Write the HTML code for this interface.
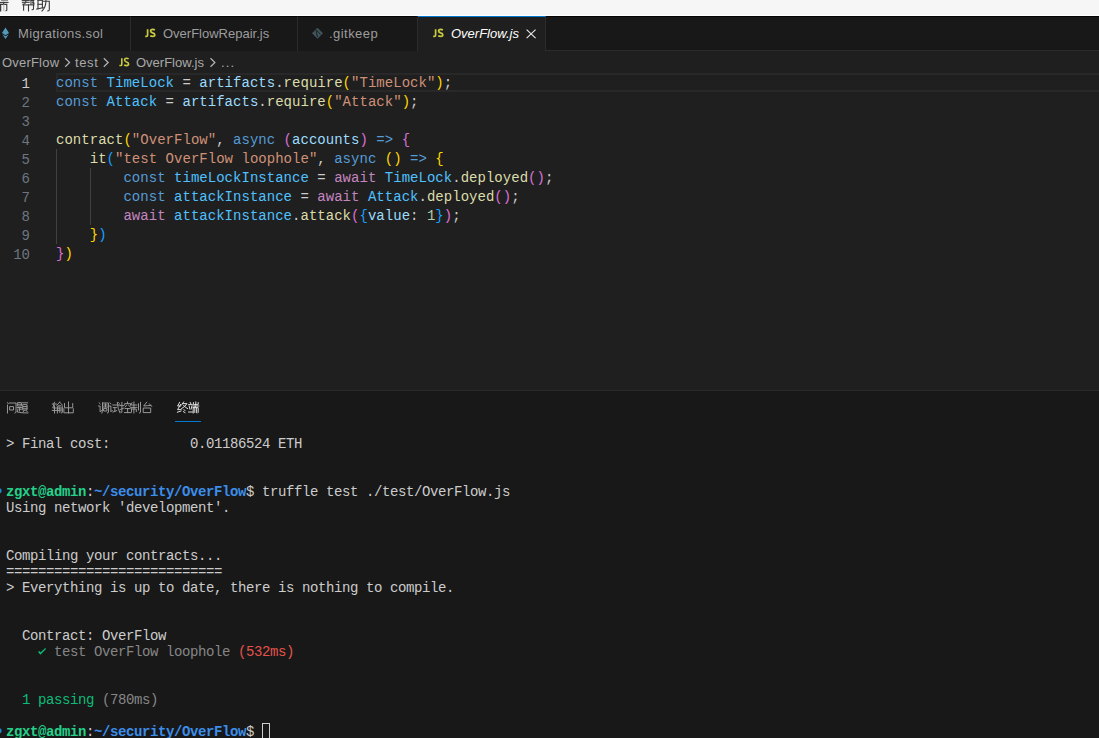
<!DOCTYPE html>
<html><head><meta charset="utf-8">
<style>
*{margin:0;padding:0;box-sizing:border-box}
html,body{width:1099px;height:738px;overflow:hidden;background:#1f1f1f}
body{position:relative;font-family:"Liberation Sans",sans-serif}
.abs{position:absolute}
svg{position:absolute;overflow:visible}
#menubar{left:0;top:0;width:1099px;height:15px;background:#f6f6f6}
#menuline{left:0;top:15px;width:1099px;height:1px;background:#ffffff}
#tabs{left:0;top:16px;width:1099px;height:35px;background:#181818;border-bottom:1px solid #2b2b2b;border-top:1px solid #050505}
.tab{position:absolute;top:-1px;height:35px;background:#181818;border-top:1px solid #050505;border-right:1px solid #2b2b2b;color:#9d9d9d;font-size:13px;line-height:34px;white-space:nowrap}
.tab.active{background:#1f1f1f;color:#fff;height:36px;border-top:1px solid #0078d4}
.tab span{position:absolute;top:0}
#crumbs{left:0;top:51px;width:1099px;height:22px;background:#1f1f1f;color:#a9a9a9;font-size:13px;line-height:22px;white-space:nowrap}
#crumbs span{position:absolute;top:1px}
.ln{position:absolute;left:0;width:30px;text-align:right;color:#6e7681;font-family:"Liberation Mono",monospace;font-size:14px;line-height:19px;height:19px}
.code{position:absolute;left:56px;font-family:"Liberation Mono",monospace;font-size:14px;line-height:19px;height:19px;white-space:pre;color:#cccccc}
#curline{left:56px;top:73px;width:1043px;height:19px;border:2px solid #282828;border-right:none}
.guide{position:absolute;width:1px;background:#404040}
#panel{left:0;top:390px;width:1099px;height:348px;background:#181818;border-top:1px solid #2b2b2b}
.term{position:absolute;left:6px;font-family:"Liberation Mono",monospace;font-size:14px;letter-spacing:-0.4px;line-height:16px;height:16px;white-space:pre;color:#cccccc}
.kw{color:#569cd6}.cn{color:#4fc1ff}.vr{color:#9cdcfe}.fn{color:#dcdcaa}.st{color:#ce9178}.aw{color:#c586c0}.nu{color:#b5cea8}
.b1{color:#ffd700}.b2{color:#da70d6}.b3{color:#179fff}
.tg{color:#23d18b;font-weight:bold}.tb{color:#3b8eea;font-weight:bold}.gr{color:#0dbc79}.gy{color:#868686}.rd{color:#e5534b}
.cjk path{fill:none;stroke-linecap:square}
.code i,.term i{position:absolute;top:0;font-style:normal}
</style></head><body>
<div id="menubar" class="abs"></div>
<div id="menuline" class="abs"></div>

<svg class="cjk" style="left:0;top:0" width="60" height="16" viewBox="0 0 60 16" stroke="#3a3a3a" stroke-width="1.1">
  
  <path d="M1.5,0 H7.5"/>
  <path d="M0,2.4 H8"/>
  <path d="M3.6,2.4 V4.2"/>
  <path d="M0.4,4.4 H6.8 V10.2 Q6.8,10.8 6,10.8"/>
  <path d="M0.5,4.4 V10.8" stroke-width="1.5"/>
  <path d="M3.8,5 V10.6" stroke="#bbbbbb"/>
  
  <path d="M22.3,0.4 H29.2"/>
  <path d="M22.3,2.3 H29.2"/>
  <path d="M25.8,0 V2.3 Q25.6,3.8 23,4.2"/>
  <path d="M31,0 V4.2"/>
  <path d="M31,0.4 H33.8 L32.6,2.4 Q34.4,2.9 33.9,3.6 L33,3.8"/>
  <path d="M23,4.9 H34"/>
  <path d="M23.6,4.9 V10.2"/>
  <path d="M28.5,4.9 V11"/>
  <path d="M33.5,4.9 V9 Q33.5,9.7 32.2,9.7"/>
  
  <path d="M38,0 V8.6"/>
  <path d="M42.4,0 V8"/>
  <path d="M38,0.3 H42.4"/>
  <path d="M38,4.3 H42.4"/>
  <path d="M36.8,9 L43.2,7.6"/>
  <path d="M43.6,1.2 H49.3 V10 Q49.3,10.9 47.9,10.9"/>
  <path d="M46,0 Q46.1,7.2 42,11"/>
</svg>

<div id="tabs" class="abs">
  <div class="tab" style="left:0;width:131px"><span style="left:18px;letter-spacing:0.36px">Migrations.sol</span></div>
  <div class="tab" style="left:131px;width:167px"><span style="left:32px">OverFlowRepair.js</span></div>
  <div class="tab" style="left:298px;width:120px"><span style="left:31px;letter-spacing:0.45px">.gitkeep</span></div>
  <div class="tab active" style="left:418px;width:128px"><span style="left:33px;font-style:italic">OverFlow.js</span></div>
</div>

<svg style="left:0;top:0" width="560" height="50" viewBox="0 0 560 50">
  <path d="M5.5,27.4 L9,33 L5.5,35.2 L2,33 Z" fill="#519aba"/>
  <path d="M2.3,34.2 L5.5,36.2 L8.7,34.2 L5.5,39 Z" fill="#519aba"/>
  <g fill="none" stroke="#cbcb41" stroke-width="1.7">
    <path d="M147.6,29.3 V35.2 Q147.6,36.3 146.3,36.3 H145.2"/>
    <path d="M154.8,30 Q154,29.3 152.6,29.3 Q150.6,29.3 150.6,31 Q150.6,32.3 152.6,32.9 Q154.8,33.5 154.8,35 Q154.8,36.4 152.6,36.4 Q151.2,36.4 150.2,35.8"/>
  </g>
  <g fill="none" stroke="#cbcb41" stroke-width="1.7">
    <path d="M435.6,29.3 V35.2 Q435.6,36.3 434.3,36.3 H433.2"/>
    <path d="M442.8,30 Q442,29.3 440.6,29.3 Q438.6,29.3 438.6,31 Q438.6,32.3 440.6,32.9 Q442.8,33.5 442.8,35 Q442.8,36.4 440.6,36.4 Q439.2,36.4 438.2,35.8"/>
  </g>
  <path d="M317.5,27.8 L323,33.3 L317.5,38.8 L312,33.3 Z" fill="#41535b"/>
  <path d="M316,30.5 L317.5,37 M316.5,30 L320.5,34.5" stroke="#181818" stroke-width="0.9" fill="none"/>
  <path d="M526.6,29.6 L535.6,38.2 M535.6,29.6 L526.6,38.2" stroke="#e8e8e8" stroke-width="1.1" fill="none"/>
</svg>

<div id="crumbs" class="abs">
  <span style="left:2px;letter-spacing:0.2px">OverFlow</span>
  <span style="left:75px;letter-spacing:0.6px">test</span>
  <span style="left:136px">OverFlow.js</span>
  <span style="left:221px;letter-spacing:1.2px">...</span>
</div>
<svg style="left:0;top:0" width="240" height="75" viewBox="0 0 240 75">
  <g fill="none" stroke="#b4b4b4" stroke-width="1.2">
    <path d="M65.2,58.3 L69.6,62.5 L65.2,66.7"/>
    <path d="M103.8,58.3 L108.2,62.5 L103.8,66.7"/>
    <path d="M210.5,58.3 L214.9,62.5 L210.5,66.7"/>
  </g>
  <g fill="none" stroke="#cbcb41" stroke-width="1.6">
    <path d="M121.8,58.3 V64.4 Q121.8,65.5 120.5,65.5 H119.4"/>
    <path d="M128.6,59 Q127.8,58.3 126.5,58.3 Q124.6,58.3 124.6,60 Q124.6,61.3 126.5,61.9 Q128.6,62.5 128.6,64 Q128.6,65.6 126.5,65.6 Q125.1,65.6 124.2,65"/>
  </g>
</svg>

<div id="curline" class="abs"></div>
<div class="ln" style="top:75px;color:#cccccc">1</div>
<div class="ln" style="top:94px">2</div>
<div class="ln" style="top:113px">3</div>
<div class="ln" style="top:132px">4</div>
<div class="ln" style="top:151px">5</div>
<div class="ln" style="top:170px">6</div>
<div class="ln" style="top:189px">7</div>
<div class="ln" style="top:208px">8</div>
<div class="ln" style="top:227px">9</div>
<div class="ln" style="top:246px">10</div>
<div class="guide" style="left:56px;top:149px;height:95px"></div>
<div class="guide" style="left:90px;top:168px;height:57px"></div>
<div class="code" style="top:74px"><i class="kw" style="left:0.0px">c</i><i class="kw" style="left:8.43px">o</i><i class="kw" style="left:16.86px">n</i><i class="kw" style="left:25.29px">s</i><i class="kw" style="left:33.72px">t</i><i class="cn" style="left:50.58px">T</i><i class="cn" style="left:59.01px">i</i><i class="cn" style="left:67.44px">m</i><i class="cn" style="left:75.87px">e</i><i class="cn" style="left:84.3px">L</i><i class="cn" style="left:92.73px">o</i><i class="cn" style="left:101.16px">c</i><i class="cn" style="left:109.59px">k</i><i style="left:126.45px">=</i><i class="vr" style="left:143.31px">a</i><i class="vr" style="left:151.74px">r</i><i class="vr" style="left:160.17px">t</i><i class="vr" style="left:168.6px">i</i><i class="vr" style="left:177.03px">f</i><i class="vr" style="left:185.46px">a</i><i class="vr" style="left:193.89px">c</i><i class="vr" style="left:202.32px">t</i><i class="vr" style="left:210.75px">s</i><i style="left:219.18px">.</i><i class="fn" style="left:227.61px">r</i><i class="fn" style="left:236.04px">e</i><i class="fn" style="left:244.47px">q</i><i class="fn" style="left:252.9px">u</i><i class="fn" style="left:261.33px">i</i><i class="fn" style="left:269.76px">r</i><i class="fn" style="left:278.19px">e</i><i class="b1" style="left:286.62px">(</i><i class="st" style="left:295.05px">"</i><i class="st" style="left:303.48px">T</i><i class="st" style="left:311.91px">i</i><i class="st" style="left:320.34px">m</i><i class="st" style="left:328.77px">e</i><i class="st" style="left:337.2px">L</i><i class="st" style="left:345.63px">o</i><i class="st" style="left:354.06px">c</i><i class="st" style="left:362.49px">k</i><i class="st" style="left:370.92px">"</i><i class="b1" style="left:379.35px">)</i><i style="left:387.78px">;</i></div>
<div class="code" style="top:93px"><i class="kw" style="left:0.0px">c</i><i class="kw" style="left:8.43px">o</i><i class="kw" style="left:16.86px">n</i><i class="kw" style="left:25.29px">s</i><i class="kw" style="left:33.72px">t</i><i class="cn" style="left:50.58px">A</i><i class="cn" style="left:59.01px">t</i><i class="cn" style="left:67.44px">t</i><i class="cn" style="left:75.87px">a</i><i class="cn" style="left:84.3px">c</i><i class="cn" style="left:92.73px">k</i><i style="left:109.59px">=</i><i class="vr" style="left:126.45px">a</i><i class="vr" style="left:134.88px">r</i><i class="vr" style="left:143.31px">t</i><i class="vr" style="left:151.74px">i</i><i class="vr" style="left:160.17px">f</i><i class="vr" style="left:168.6px">a</i><i class="vr" style="left:177.03px">c</i><i class="vr" style="left:185.46px">t</i><i class="vr" style="left:193.89px">s</i><i style="left:202.32px">.</i><i class="fn" style="left:210.75px">r</i><i class="fn" style="left:219.18px">e</i><i class="fn" style="left:227.61px">q</i><i class="fn" style="left:236.04px">u</i><i class="fn" style="left:244.47px">i</i><i class="fn" style="left:252.9px">r</i><i class="fn" style="left:261.33px">e</i><i class="b1" style="left:269.76px">(</i><i class="st" style="left:278.19px">"</i><i class="st" style="left:286.62px">A</i><i class="st" style="left:295.05px">t</i><i class="st" style="left:303.48px">t</i><i class="st" style="left:311.91px">a</i><i class="st" style="left:320.34px">c</i><i class="st" style="left:328.77px">k</i><i class="st" style="left:337.2px">"</i><i class="b1" style="left:345.63px">)</i><i style="left:354.06px">;</i></div>
<div class="code" style="top:131px"><i class="fn" style="left:0.0px">c</i><i class="fn" style="left:8.43px">o</i><i class="fn" style="left:16.86px">n</i><i class="fn" style="left:25.29px">t</i><i class="fn" style="left:33.72px">r</i><i class="fn" style="left:42.15px">a</i><i class="fn" style="left:50.58px">c</i><i class="fn" style="left:59.01px">t</i><i class="b1" style="left:67.44px">(</i><i class="st" style="left:75.87px">"</i><i class="st" style="left:84.3px">O</i><i class="st" style="left:92.73px">v</i><i class="st" style="left:101.16px">e</i><i class="st" style="left:109.59px">r</i><i class="st" style="left:118.02px">F</i><i class="st" style="left:126.45px">l</i><i class="st" style="left:134.88px">o</i><i class="st" style="left:143.31px">w</i><i class="st" style="left:151.74px">"</i><i style="left:160.17px">,</i><i class="kw" style="left:177.03px">a</i><i class="kw" style="left:185.46px">s</i><i class="kw" style="left:193.89px">y</i><i class="kw" style="left:202.32px">n</i><i class="kw" style="left:210.75px">c</i><i class="b2" style="left:227.61px">(</i><i class="vr" style="left:236.04px">a</i><i class="vr" style="left:244.47px">c</i><i class="vr" style="left:252.9px">c</i><i class="vr" style="left:261.33px">o</i><i class="vr" style="left:269.76px">u</i><i class="vr" style="left:278.19px">n</i><i class="vr" style="left:286.62px">t</i><i class="vr" style="left:295.05px">s</i><i class="b2" style="left:303.48px">)</i><i class="kw" style="left:320.34px">=</i><i class="kw" style="left:328.77px">&gt;</i><i class="b2" style="left:345.63px">{</i></div>
<div class="code" style="top:150px"><i class="fn" style="left:33.72px">i</i><i class="fn" style="left:42.15px">t</i><i class="b3" style="left:50.58px">(</i><i class="st" style="left:59.01px">"</i><i class="st" style="left:67.44px">t</i><i class="st" style="left:75.87px">e</i><i class="st" style="left:84.3px">s</i><i class="st" style="left:92.73px">t</i><i class="st" style="left:109.59px">O</i><i class="st" style="left:118.02px">v</i><i class="st" style="left:126.45px">e</i><i class="st" style="left:134.88px">r</i><i class="st" style="left:143.31px">F</i><i class="st" style="left:151.74px">l</i><i class="st" style="left:160.17px">o</i><i class="st" style="left:168.6px">w</i><i class="st" style="left:185.46px">l</i><i class="st" style="left:193.89px">o</i><i class="st" style="left:202.32px">o</i><i class="st" style="left:210.75px">p</i><i class="st" style="left:219.18px">h</i><i class="st" style="left:227.61px">o</i><i class="st" style="left:236.04px">l</i><i class="st" style="left:244.47px">e</i><i class="st" style="left:252.9px">"</i><i style="left:261.33px">,</i><i class="kw" style="left:278.19px">a</i><i class="kw" style="left:286.62px">s</i><i class="kw" style="left:295.05px">y</i><i class="kw" style="left:303.48px">n</i><i class="kw" style="left:311.91px">c</i><i class="b1" style="left:328.77px">(</i><i class="b1" style="left:337.2px">)</i><i class="kw" style="left:354.06px">=</i><i class="kw" style="left:362.49px">&gt;</i><i class="b1" style="left:379.35px">{</i></div>
<div class="code" style="top:169px"><i class="kw" style="left:67.44px">c</i><i class="kw" style="left:75.87px">o</i><i class="kw" style="left:84.3px">n</i><i class="kw" style="left:92.73px">s</i><i class="kw" style="left:101.16px">t</i><i class="cn" style="left:118.02px">t</i><i class="cn" style="left:126.45px">i</i><i class="cn" style="left:134.88px">m</i><i class="cn" style="left:143.31px">e</i><i class="cn" style="left:151.74px">L</i><i class="cn" style="left:160.17px">o</i><i class="cn" style="left:168.6px">c</i><i class="cn" style="left:177.03px">k</i><i class="cn" style="left:185.46px">I</i><i class="cn" style="left:193.89px">n</i><i class="cn" style="left:202.32px">s</i><i class="cn" style="left:210.75px">t</i><i class="cn" style="left:219.18px">a</i><i class="cn" style="left:227.61px">n</i><i class="cn" style="left:236.04px">c</i><i class="cn" style="left:244.47px">e</i><i style="left:261.33px">=</i><i class="aw" style="left:278.19px">a</i><i class="aw" style="left:286.62px">w</i><i class="aw" style="left:295.05px">a</i><i class="aw" style="left:303.48px">i</i><i class="aw" style="left:311.91px">t</i><i class="cn" style="left:328.77px">T</i><i class="cn" style="left:337.2px">i</i><i class="cn" style="left:345.63px">m</i><i class="cn" style="left:354.06px">e</i><i class="cn" style="left:362.49px">L</i><i class="cn" style="left:370.92px">o</i><i class="cn" style="left:379.35px">c</i><i class="cn" style="left:387.78px">k</i><i style="left:396.21px">.</i><i class="fn" style="left:404.64px">d</i><i class="fn" style="left:413.07px">e</i><i class="fn" style="left:421.5px">p</i><i class="fn" style="left:429.93px">l</i><i class="fn" style="left:438.36px">o</i><i class="fn" style="left:446.79px">y</i><i class="fn" style="left:455.22px">e</i><i class="fn" style="left:463.65px">d</i><i class="b2" style="left:472.08px">(</i><i class="b2" style="left:480.51px">)</i><i style="left:488.94px">;</i></div>
<div class="code" style="top:188px"><i class="kw" style="left:67.44px">c</i><i class="kw" style="left:75.87px">o</i><i class="kw" style="left:84.3px">n</i><i class="kw" style="left:92.73px">s</i><i class="kw" style="left:101.16px">t</i><i class="cn" style="left:118.02px">a</i><i class="cn" style="left:126.45px">t</i><i class="cn" style="left:134.88px">t</i><i class="cn" style="left:143.31px">a</i><i class="cn" style="left:151.74px">c</i><i class="cn" style="left:160.17px">k</i><i class="cn" style="left:168.6px">I</i><i class="cn" style="left:177.03px">n</i><i class="cn" style="left:185.46px">s</i><i class="cn" style="left:193.89px">t</i><i class="cn" style="left:202.32px">a</i><i class="cn" style="left:210.75px">n</i><i class="cn" style="left:219.18px">c</i><i class="cn" style="left:227.61px">e</i><i style="left:244.47px">=</i><i class="aw" style="left:261.33px">a</i><i class="aw" style="left:269.76px">w</i><i class="aw" style="left:278.19px">a</i><i class="aw" style="left:286.62px">i</i><i class="aw" style="left:295.05px">t</i><i class="cn" style="left:311.91px">A</i><i class="cn" style="left:320.34px">t</i><i class="cn" style="left:328.77px">t</i><i class="cn" style="left:337.2px">a</i><i class="cn" style="left:345.63px">c</i><i class="cn" style="left:354.06px">k</i><i style="left:362.49px">.</i><i class="fn" style="left:370.92px">d</i><i class="fn" style="left:379.35px">e</i><i class="fn" style="left:387.78px">p</i><i class="fn" style="left:396.21px">l</i><i class="fn" style="left:404.64px">o</i><i class="fn" style="left:413.07px">y</i><i class="fn" style="left:421.5px">e</i><i class="fn" style="left:429.93px">d</i><i class="b2" style="left:438.36px">(</i><i class="b2" style="left:446.79px">)</i><i style="left:455.22px">;</i></div>
<div class="code" style="top:207px"><i class="aw" style="left:67.44px">a</i><i class="aw" style="left:75.87px">w</i><i class="aw" style="left:84.3px">a</i><i class="aw" style="left:92.73px">i</i><i class="aw" style="left:101.16px">t</i><i class="cn" style="left:118.02px">a</i><i class="cn" style="left:126.45px">t</i><i class="cn" style="left:134.88px">t</i><i class="cn" style="left:143.31px">a</i><i class="cn" style="left:151.74px">c</i><i class="cn" style="left:160.17px">k</i><i class="cn" style="left:168.6px">I</i><i class="cn" style="left:177.03px">n</i><i class="cn" style="left:185.46px">s</i><i class="cn" style="left:193.89px">t</i><i class="cn" style="left:202.32px">a</i><i class="cn" style="left:210.75px">n</i><i class="cn" style="left:219.18px">c</i><i class="cn" style="left:227.61px">e</i><i style="left:236.04px">.</i><i class="fn" style="left:244.47px">a</i><i class="fn" style="left:252.9px">t</i><i class="fn" style="left:261.33px">t</i><i class="fn" style="left:269.76px">a</i><i class="fn" style="left:278.19px">c</i><i class="fn" style="left:286.62px">k</i><i class="b2" style="left:295.05px">(</i><i class="b3" style="left:303.48px">{</i><i class="vr" style="left:311.91px">v</i><i class="vr" style="left:320.34px">a</i><i class="vr" style="left:328.77px">l</i><i class="vr" style="left:337.2px">u</i><i class="vr" style="left:345.63px">e</i><i style="left:354.06px">:</i><i class="nu" style="left:370.92px">1</i><i class="b3" style="left:379.35px">}</i><i class="b2" style="left:387.78px">)</i><i style="left:396.21px">;</i></div>
<div class="code" style="top:226px"><i class="b1" style="left:33.72px">}</i><i class="b3" style="left:42.15px">)</i></div>
<div class="code" style="top:245px"><i class="b2" style="left:0.0px">}</i><i class="b1" style="left:8.43px">)</i></div>

<div id="panel" class="abs"></div>
<div class="abs" style="left:175px;top:421px;width:26px;height:1px;background:#0078d4"></div>

<svg class="cjk" style="left:0;top:0" width="220" height="430" viewBox="0 0 220 430" stroke-width="0.95">
  <g stroke="#9d9d9d">
    
    <g transform="translate(6.5,402)">
      <path d="M1,0.6 L1.8,1.6"/><path d="M1,3 V11"/><path d="M3,1 H9.5 V10.2 Q9.5,11 8.5,11"/><path d="M3.6,4.6 H7 V8 H3.6 Z"/>
    </g>
    
    <g transform="translate(17,402)">
      <path d="M0.8,0.6 H4.4 V4 H0.8 Z"/><path d="M0.8,2.3 H4.4"/><path d="M0,5.5 H5"/><path d="M2.6,5.5 V9"/><path d="M2.6,7.2 H4.5"/><path d="M1,6.8 L0.4,10 Q4,11 10.8,11"/>
      <path d="M5.6,0.8 H10.6"/><path d="M6.2,2.6 H10 V8 H6.2 Z"/><path d="M6.2,4.5 H10 M6.2,6.3 H10"/><path d="M7.2,8.4 L6,10"/><path d="M9,8.4 L10.6,10"/>
    </g>
    
    <g transform="translate(52,402)">
      <path d="M0.3,2 H4.3"/><path d="M2.4,0.3 L0.8,6 H4.3"/><path d="M2.5,3.8 V11"/><path d="M0.3,8.4 H4.5"/>
      <path d="M7.6,0.2 L4.8,3.2"/><path d="M7.6,0.2 L10.6,3.2"/><path d="M6.2,3.8 H9"/><path d="M5.4,5 H7.8 V10.5 M5.4,5 V11 M5.4,6.8 H7.8 M5.4,8.6 H7.8"/><path d="M9.1,5.2 V9"/><path d="M10.4,4.8 V10.4 Q10.4,11 9.6,11"/>
    </g>
    
    <g transform="translate(63.5,402)">
      <path d="M5,0 V11"/><path d="M1,1.6 V5.8 H9.2 V1.6"/><path d="M0.4,6.8 V10.8 H9.8 V6.8"/>
    </g>
    
    <g transform="translate(98.5,402)">
      <path d="M0.6,0.8 L1.6,1.8"/><path d="M0,4 H1.6 V9.8 L3,8.4"/>
      <path d="M4,1 H10 V10.2 Q10,11 9,11"/><path d="M4,1 V8 L3.4,11"/><path d="M5.4,3 H8.6"/><path d="M7,1.8 V5"/><path d="M5,5 H9"/><path d="M5.6,6.6 H8.4 V9 H5.6 Z"/>
    </g>
    
    <g transform="translate(109.3,402)">
      <path d="M0.6,0.8 L1.6,1.8"/><path d="M0,4 H1.6 V9.8 L3,8.4"/>
      <path d="M3.5,3 H10.5"/><path d="M4,5.6 H7"/><path d="M5.5,5.6 V9.4"/><path d="M3.6,10 L7.4,8.6"/><path d="M8,0.4 Q8.4,7 10.6,10.8"/><path d="M9.2,0.6 L10,1.4"/>
    </g>
    
    <g transform="translate(120.1,402)">
      <path d="M0,3.6 H3.4"/><path d="M1.8,0.4 V10.4 L0.8,10"/><path d="M0,7.6 L3.4,6.2"/>
      <path d="M7.4,0 V1.2"/><path d="M4.6,3 V1.6 H10.4 V3"/><path d="M6.6,3.2 L5,5"/><path d="M8.4,3.2 L10.4,5"/><path d="M5,6.6 H10"/><path d="M7.5,6.6 V10.5"/><path d="M4.4,10.6 H10.6"/>
    </g>
    
    <g transform="translate(130.9,402)">
      <path d="M1,0.8 L0.4,2.4"/><path d="M0,3 H6"/><path d="M3,0 V11"/><path d="M0,5.4 H6"/><path d="M0.6,7 V10"/><path d="M0.6,7 H5.4 V9.6"/>
      <path d="M7.6,1.8 V8"/><path d="M9.6,0.4 V10.2 Q9.6,11 8.6,11"/>
    </g>
    
    <g transform="translate(141.7,402)">
      <path d="M5,0.2 L2,4 Q6,3.6 9.2,3.4"/><path d="M7.6,1.8 L10,4.4"/><path d="M2,6 H9 V10.6 H2 Z"/>
    </g>
  </g>
  <g stroke="#e7e7e7">
    
    <g transform="translate(177,402)">
      <path d="M2.6,0.4 L0.6,4 H3.6"/><path d="M3.6,2.4 L0.6,7.6 H4"/><path d="M0.4,10.2 L4,9"/>
      <path d="M6.6,0 L4.6,3"/><path d="M6,1.6 H10 Q8,5 4.6,6.6"/><path d="M6.6,3.4 Q8,5.6 10.6,6.6"/><path d="M7,7.6 L8,8.6"/><path d="M6.4,9.6 L8,10.6"/>
    </g>
    
    <g transform="translate(188.2,402)">
      <path d="M2,0.4 L2.6,1.6"/><path d="M0.4,2.6 H4"/><path d="M1,4 L1.6,7"/><path d="M3.6,4 L3,7"/><path d="M0.4,10 H4.2"/>
      <path d="M7.6,0 V2.6"/><path d="M5.2,0.6 V2.6 H10 V0.6"/><path d="M4.6,4 H10.6"/><path d="M7.2,4 L6.6,5.6"/><path d="M5,5.6 V11"/><path d="M5,5.6 H10 V10.4 L9.4,11"/><path d="M6.6,6.2 V10.4"/><path d="M8.4,6.2 V10.4"/>
    </g>
  </g>
</svg>

<div class="term" style="top:436px"><i style="left:0.0px">&gt;</i><i style="left:16.0px">F</i><i style="left:24.0px">i</i><i style="left:32.0px">n</i><i style="left:40.0px">a</i><i style="left:48.0px">l</i><i style="left:64.0px">c</i><i style="left:72.0px">o</i><i style="left:80.0px">s</i><i style="left:88.0px">t</i><i style="left:96.0px">:</i><i style="left:184.0px">0</i><i style="left:192.0px">.</i><i style="left:200.0px">0</i><i style="left:208.0px">1</i><i style="left:216.0px">1</i><i style="left:224.0px">8</i><i style="left:232.0px">6</i><i style="left:240.0px">5</i><i style="left:248.0px">2</i><i style="left:256.0px">4</i><i style="left:272.0px">E</i><i style="left:280.0px">T</i><i style="left:288.0px">H</i></div>
<div class="term" style="top:484px"><i class="tg" style="left:0.0px">z</i><i class="tg" style="left:8.0px">g</i><i class="tg" style="left:16.0px">x</i><i class="tg" style="left:24.0px">t</i><i class="tg" style="left:32.0px">@</i><i class="tg" style="left:40.0px">a</i><i class="tg" style="left:48.0px">d</i><i class="tg" style="left:56.0px">m</i><i class="tg" style="left:64.0px">i</i><i class="tg" style="left:72.0px">n</i><i style="left:80.0px">:</i><i class="tb" style="left:88.0px">~</i><i class="tb" style="left:96.0px">/</i><i class="tb" style="left:104.0px">s</i><i class="tb" style="left:112.0px">e</i><i class="tb" style="left:120.0px">c</i><i class="tb" style="left:128.0px">u</i><i class="tb" style="left:136.0px">r</i><i class="tb" style="left:144.0px">i</i><i class="tb" style="left:152.0px">t</i><i class="tb" style="left:160.0px">y</i><i class="tb" style="left:168.0px">/</i><i class="tb" style="left:176.0px">O</i><i class="tb" style="left:184.0px">v</i><i class="tb" style="left:192.0px">e</i><i class="tb" style="left:200.0px">r</i><i class="tb" style="left:208.0px">F</i><i class="tb" style="left:216.0px">l</i><i class="tb" style="left:224.0px">o</i><i class="tb" style="left:232.0px">w</i><i style="left:240.0px">$</i><i style="left:256.0px">t</i><i style="left:264.0px">r</i><i style="left:272.0px">u</i><i style="left:280.0px">f</i><i style="left:288.0px">f</i><i style="left:296.0px">l</i><i style="left:304.0px">e</i><i style="left:320.0px">t</i><i style="left:328.0px">e</i><i style="left:336.0px">s</i><i style="left:344.0px">t</i><i style="left:360.0px">.</i><i style="left:368.0px">/</i><i style="left:376.0px">t</i><i style="left:384.0px">e</i><i style="left:392.0px">s</i><i style="left:400.0px">t</i><i style="left:408.0px">/</i><i style="left:416.0px">O</i><i style="left:424.0px">v</i><i style="left:432.0px">e</i><i style="left:440.0px">r</i><i style="left:448.0px">F</i><i style="left:456.0px">l</i><i style="left:464.0px">o</i><i style="left:472.0px">w</i><i style="left:480.0px">.</i><i style="left:488.0px">j</i><i style="left:496.0px">s</i></div>
<div class="term" style="top:500px"><i style="left:0.0px">U</i><i style="left:8.0px">s</i><i style="left:16.0px">i</i><i style="left:24.0px">n</i><i style="left:32.0px">g</i><i style="left:48.0px">n</i><i style="left:56.0px">e</i><i style="left:64.0px">t</i><i style="left:72.0px">w</i><i style="left:80.0px">o</i><i style="left:88.0px">r</i><i style="left:96.0px">k</i><i style="left:112.0px">'</i><i style="left:120.0px">d</i><i style="left:128.0px">e</i><i style="left:136.0px">v</i><i style="left:144.0px">e</i><i style="left:152.0px">l</i><i style="left:160.0px">o</i><i style="left:168.0px">p</i><i style="left:176.0px">m</i><i style="left:184.0px">e</i><i style="left:192.0px">n</i><i style="left:200.0px">t</i><i style="left:208.0px">'</i><i style="left:216.0px">.</i></div>
<div class="term" style="top:548px"><i style="left:0.0px">C</i><i style="left:8.0px">o</i><i style="left:16.0px">m</i><i style="left:24.0px">p</i><i style="left:32.0px">i</i><i style="left:40.0px">l</i><i style="left:48.0px">i</i><i style="left:56.0px">n</i><i style="left:64.0px">g</i><i style="left:80.0px">y</i><i style="left:88.0px">o</i><i style="left:96.0px">u</i><i style="left:104.0px">r</i><i style="left:120.0px">c</i><i style="left:128.0px">o</i><i style="left:136.0px">n</i><i style="left:144.0px">t</i><i style="left:152.0px">r</i><i style="left:160.0px">a</i><i style="left:168.0px">c</i><i style="left:176.0px">t</i><i style="left:184.0px">s</i><i style="left:192.0px">.</i><i style="left:200.0px">.</i><i style="left:208.0px">.</i></div>
<div class="term" style="top:564px"><i style="left:0.0px">=</i><i style="left:8.0px">=</i><i style="left:16.0px">=</i><i style="left:24.0px">=</i><i style="left:32.0px">=</i><i style="left:40.0px">=</i><i style="left:48.0px">=</i><i style="left:56.0px">=</i><i style="left:64.0px">=</i><i style="left:72.0px">=</i><i style="left:80.0px">=</i><i style="left:88.0px">=</i><i style="left:96.0px">=</i><i style="left:104.0px">=</i><i style="left:112.0px">=</i><i style="left:120.0px">=</i><i style="left:128.0px">=</i><i style="left:136.0px">=</i><i style="left:144.0px">=</i><i style="left:152.0px">=</i><i style="left:160.0px">=</i><i style="left:168.0px">=</i><i style="left:176.0px">=</i><i style="left:184.0px">=</i><i style="left:192.0px">=</i><i style="left:200.0px">=</i><i style="left:208.0px">=</i></div>
<div class="term" style="top:580px"><i style="left:0.0px">&gt;</i><i style="left:16.0px">E</i><i style="left:24.0px">v</i><i style="left:32.0px">e</i><i style="left:40.0px">r</i><i style="left:48.0px">y</i><i style="left:56.0px">t</i><i style="left:64.0px">h</i><i style="left:72.0px">i</i><i style="left:80.0px">n</i><i style="left:88.0px">g</i><i style="left:104.0px">i</i><i style="left:112.0px">s</i><i style="left:128.0px">u</i><i style="left:136.0px">p</i><i style="left:152.0px">t</i><i style="left:160.0px">o</i><i style="left:176.0px">d</i><i style="left:184.0px">a</i><i style="left:192.0px">t</i><i style="left:200.0px">e</i><i style="left:208.0px">,</i><i style="left:224.0px">t</i><i style="left:232.0px">h</i><i style="left:240.0px">e</i><i style="left:248.0px">r</i><i style="left:256.0px">e</i><i style="left:272.0px">i</i><i style="left:280.0px">s</i><i style="left:296.0px">n</i><i style="left:304.0px">o</i><i style="left:312.0px">t</i><i style="left:320.0px">h</i><i style="left:328.0px">i</i><i style="left:336.0px">n</i><i style="left:344.0px">g</i><i style="left:360.0px">t</i><i style="left:368.0px">o</i><i style="left:384.0px">c</i><i style="left:392.0px">o</i><i style="left:400.0px">m</i><i style="left:408.0px">p</i><i style="left:416.0px">i</i><i style="left:424.0px">l</i><i style="left:432.0px">e</i><i style="left:440.0px">.</i></div>
<div class="term" style="top:628px"><i style="left:16.0px">C</i><i style="left:24.0px">o</i><i style="left:32.0px">n</i><i style="left:40.0px">t</i><i style="left:48.0px">r</i><i style="left:56.0px">a</i><i style="left:64.0px">c</i><i style="left:72.0px">t</i><i style="left:80.0px">:</i><i style="left:96.0px">O</i><i style="left:104.0px">v</i><i style="left:112.0px">e</i><i style="left:120.0px">r</i><i style="left:128.0px">F</i><i style="left:136.0px">l</i><i style="left:144.0px">o</i><i style="left:152.0px">w</i></div>
<div class="term" style="top:644px"><i class="gy" style="left:48.0px">t</i><i class="gy" style="left:56.0px">e</i><i class="gy" style="left:64.0px">s</i><i class="gy" style="left:72.0px">t</i><i class="gy" style="left:88.0px">O</i><i class="gy" style="left:96.0px">v</i><i class="gy" style="left:104.0px">e</i><i class="gy" style="left:112.0px">r</i><i class="gy" style="left:120.0px">F</i><i class="gy" style="left:128.0px">l</i><i class="gy" style="left:136.0px">o</i><i class="gy" style="left:144.0px">w</i><i class="gy" style="left:160.0px">l</i><i class="gy" style="left:168.0px">o</i><i class="gy" style="left:176.0px">o</i><i class="gy" style="left:184.0px">p</i><i class="gy" style="left:192.0px">h</i><i class="gy" style="left:200.0px">o</i><i class="gy" style="left:208.0px">l</i><i class="gy" style="left:216.0px">e</i><i class="rd" style="left:232.0px">(</i><i class="rd" style="left:240.0px">5</i><i class="rd" style="left:248.0px">3</i><i class="rd" style="left:256.0px">2</i><i class="rd" style="left:264.0px">m</i><i class="rd" style="left:272.0px">s</i><i class="rd" style="left:280.0px">)</i></div>
<div class="term" style="top:692px"><i class="gr" style="left:16.0px">1</i><i class="gr" style="left:32.0px">p</i><i class="gr" style="left:40.0px">a</i><i class="gr" style="left:48.0px">s</i><i class="gr" style="left:56.0px">s</i><i class="gr" style="left:64.0px">i</i><i class="gr" style="left:72.0px">n</i><i class="gr" style="left:80.0px">g</i><i class="gy" style="left:96.0px">(</i><i class="gy" style="left:104.0px">7</i><i class="gy" style="left:112.0px">8</i><i class="gy" style="left:120.0px">0</i><i class="gy" style="left:128.0px">m</i><i class="gy" style="left:136.0px">s</i><i class="gy" style="left:144.0px">)</i></div>
<div class="term" style="top:724px"><i class="tg" style="left:0.0px">z</i><i class="tg" style="left:8.0px">g</i><i class="tg" style="left:16.0px">x</i><i class="tg" style="left:24.0px">t</i><i class="tg" style="left:32.0px">@</i><i class="tg" style="left:40.0px">a</i><i class="tg" style="left:48.0px">d</i><i class="tg" style="left:56.0px">m</i><i class="tg" style="left:64.0px">i</i><i class="tg" style="left:72.0px">n</i><i style="left:80.0px">:</i><i class="tb" style="left:88.0px">~</i><i class="tb" style="left:96.0px">/</i><i class="tb" style="left:104.0px">s</i><i class="tb" style="left:112.0px">e</i><i class="tb" style="left:120.0px">c</i><i class="tb" style="left:128.0px">u</i><i class="tb" style="left:136.0px">r</i><i class="tb" style="left:144.0px">i</i><i class="tb" style="left:152.0px">t</i><i class="tb" style="left:160.0px">y</i><i class="tb" style="left:168.0px">/</i><i class="tb" style="left:176.0px">O</i><i class="tb" style="left:184.0px">v</i><i class="tb" style="left:192.0px">e</i><i class="tb" style="left:200.0px">r</i><i class="tb" style="left:208.0px">F</i><i class="tb" style="left:216.0px">l</i><i class="tb" style="left:224.0px">o</i><i class="tb" style="left:232.0px">w</i><i style="left:240.0px">$</i></div>
<div class="abs" style="left:262px;top:723px;width:8px;height:16px;border:1px solid #cccccc"></div>
<svg style="left:0;top:0" width="10" height="738" viewBox="0 0 10 738">
  <circle cx="-1" cy="490.8" r="2.6" fill="#1f8ad2"/>
  <circle cx="-1" cy="730.8" r="2.6" fill="#1f8ad2"/>
</svg>
<svg style="left:0;top:0" width="60" height="738" viewBox="0 0 60 738">
  <path d="M38,651.7 L39.3,650.9 L40.4,652.5 L45.3,648 L46,649 L40.3,654.7 Z" fill="#0dbc79"/>
</svg>
</body></html>
